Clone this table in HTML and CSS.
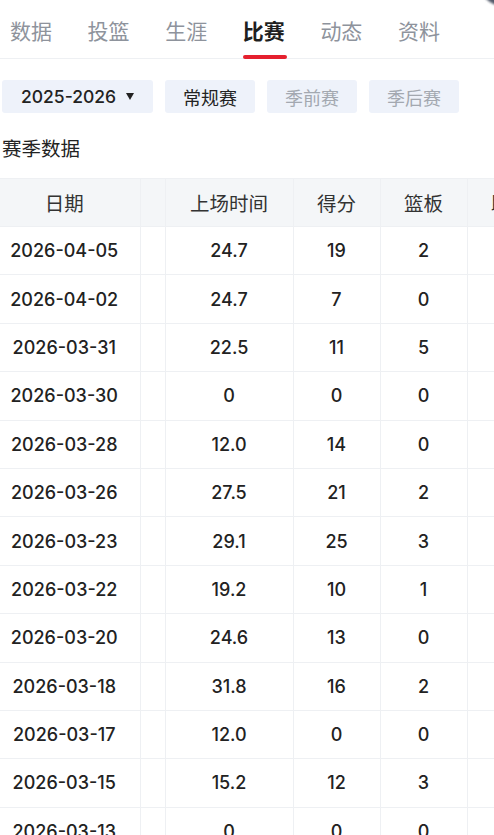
FILE: index.html
```html
<!DOCTYPE html>
<html lang="zh">
<head>
<meta charset="utf-8">
<link rel="stylesheet" href="styles.css">
</head>
<body>
<div class="page">
  <div class="corner"></div>
  <nav class="tabs">
    <span class="tab">数据</span>
    <span class="tab">投篮</span>
    <span class="tab">生涯</span>
    <span class="tab active">比赛</span>
    <span class="tab">动态</span>
    <span class="tab">资料</span>
  </nav>
  <div class="filters">
    <span class="chip season">2025-2026<span class="caret"></span></span>
    <span class="chip on">常规赛</span>
    <span class="chip">季前赛</span>
    <span class="chip">季后赛</span>
  </div>
  <h2 class="title">赛季数据</h2>
  <table class="stats">
    <thead>
      <tr><th class="c-date">日期</th><th class="c-gap"></th><th class="c-min">上场时间</th><th class="c-pts">得分</th><th class="c-reb">篮板</th><th class="c-ast">助攻</th></tr>
    </thead>
    <tbody>
      <tr><td class="c-date">2026-04-05</td><td class="c-gap"></td><td>24.7</td><td>19</td><td>2</td><td></td></tr>
      <tr><td class="c-date">2026-04-02</td><td class="c-gap"></td><td>24.7</td><td>7</td><td>0</td><td></td></tr>
      <tr><td class="c-date">2026-03-31</td><td class="c-gap"></td><td>22.5</td><td>11</td><td>5</td><td></td></tr>
      <tr><td class="c-date">2026-03-30</td><td class="c-gap"></td><td>0</td><td>0</td><td>0</td><td></td></tr>
      <tr><td class="c-date">2026-03-28</td><td class="c-gap"></td><td>12.0</td><td>14</td><td>0</td><td></td></tr>
      <tr><td class="c-date">2026-03-26</td><td class="c-gap"></td><td>27.5</td><td>21</td><td>2</td><td></td></tr>
      <tr><td class="c-date">2026-03-23</td><td class="c-gap"></td><td>29.1</td><td>25</td><td>3</td><td></td></tr>
      <tr><td class="c-date">2026-03-22</td><td class="c-gap"></td><td>19.2</td><td>10</td><td>1</td><td></td></tr>
      <tr><td class="c-date">2026-03-20</td><td class="c-gap"></td><td>24.6</td><td>13</td><td>0</td><td></td></tr>
      <tr><td class="c-date">2026-03-18</td><td class="c-gap"></td><td>31.8</td><td>16</td><td>2</td><td></td></tr>
      <tr><td class="c-date">2026-03-17</td><td class="c-gap"></td><td>12.0</td><td>0</td><td>0</td><td></td></tr>
      <tr><td class="c-date">2026-03-15</td><td class="c-gap"></td><td>15.2</td><td>12</td><td>3</td><td></td></tr>
      <tr><td class="c-date">2026-03-13</td><td class="c-gap"></td><td>0</td><td>0</td><td>0</td><td></td></tr>
    </tbody>
  </table>
</div>
</body>
</html>
```
FILE: styles.css
```css
html, body {
  margin: 0;
  padding: 0;
  background: #fff;
}
body {
  width: 494px;
  height: 835px;
  overflow: hidden;
  font-family: Inter, "Noto Sans CJK SC", sans-serif;
  color: #222;
}
.page {
  position: relative;
  width: 494px;
}
.corner {
  position: absolute;
  top: -9px;
  right: -18px;
  width: 30px;
  height: 14px;
  border-radius: 50%;
  background: #505868;
  transform: rotate(25deg);
  filter: blur(0.8px);
}
.tabs {
  display: flex;
  gap: 35.6px;
  padding: 0 10px;
  height: 58px;
  border-bottom: 1px solid #eef0f3;
}
.tab {
  position: relative;
  font-family: "Noto Sans CJK SC", sans-serif;
  font-size: 21px;
  line-height: 42px;
  padding-top: 9px;
  color: #8e939c;
  white-space: nowrap;
}
.tab.active {
  color: #1f1f1f;
  font-weight: 700;
}
.tab.active::after {
  content: "";
  position: absolute;
  left: 0;
  right: -2px;
  top: 55px;
  height: 4px;
  border-radius: 2px;
  background: #e5202e;
}
.filters {
  display: flex;
  gap: 12px;
  padding: 21px 0 0 2px;
}
.chip {
  display: flex;
  align-items: center;
  justify-content: center;
  width: 90px;
  height: 33px;
  border-radius: 3px;
  background: #eef2fa;
  color: #a3a8b0;
  font-size: 18px;
  font-family: "Noto Sans CJK SC", sans-serif;
}
.chip.on {
  color: #222;
}
.chip.season {
  width: 151px;
  color: #222;
  justify-content: flex-start;
  padding-left: 19px;
  box-sizing: border-box;
  font-family: Inter, sans-serif;
  font-size: 17.5px;
  font-weight: 500;
}
.caret {
  width: 0;
  height: 0;
  margin-left: 10px;
  border-left: 4.5px solid transparent;
  border-right: 4.5px solid transparent;
  border-top: 7px solid #222;
}
.title {
  margin: 0;
  padding: 21px 0 0 2px;
  height: 44px;
  font-family: "Noto Sans CJK SC", sans-serif;
  font-size: 19.5px;
  font-weight: 400;
  line-height: 28px;
  color: #222;
}
.stats {
  border-collapse: collapse;
  table-layout: fixed;
  width: 549px;
  font-size: 18px;
  font-weight: 500;
}
.stats th, .stats td {
  border: 1px solid #eef0f3;
  text-align: center;
  padding: 0;
  white-space: nowrap;
  overflow: hidden;
}
.stats thead tr {
  height: 48px;
  background: #f4f6f8;
}
.stats th {
  font-family: "Noto Sans CJK SC", sans-serif;
  font-weight: 400;
  font-size: 19.5px;
  color: #333;
}
.stats tbody tr {
  height: 48.4px;
}
.stats tr > :first-child {
  border-left: none;
}
.c-date {
  width: 140px;
  padding-right: 11px !important;
  box-sizing: border-box;
}
.c-gap { width: 24px; }
.c-min { width: 127px; }
.c-pts { width: 86px; }
.c-reb { width: 86px; }
.c-ast { width: 86px; }
```
